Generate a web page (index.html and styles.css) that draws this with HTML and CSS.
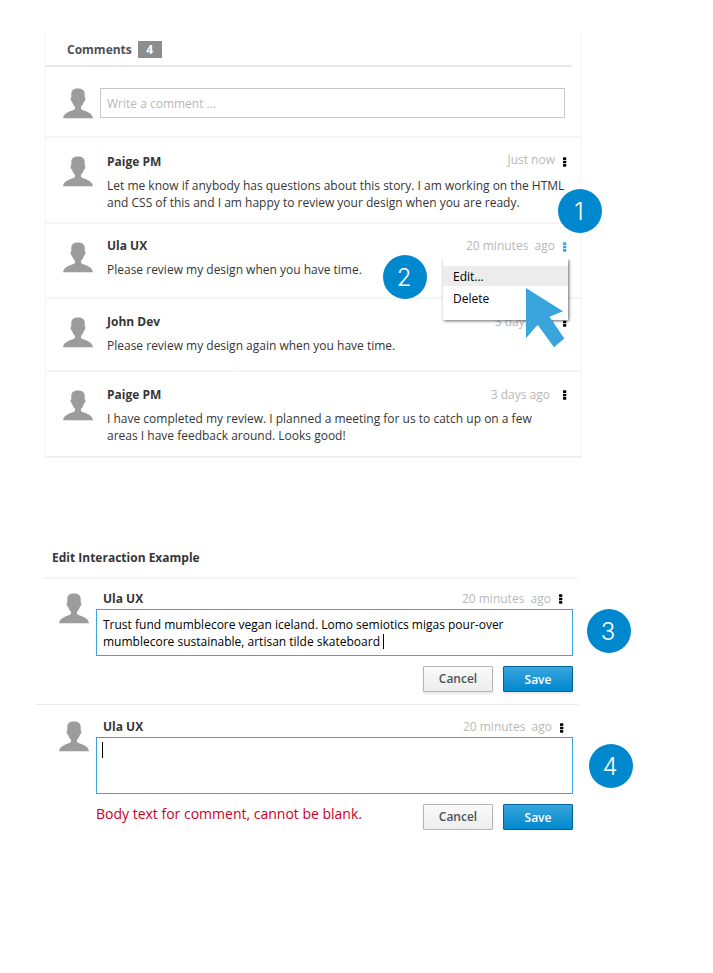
FILE: index.html
```html
<!DOCTYPE html>
<html lang="en">
<head>
<meta charset="utf-8">
<title>Comments</title>
<link rel="stylesheet" href="styles.css">
</head>
<body>
<svg class="defs" aria-hidden="true">
  <symbol id="avatar" viewBox="0 0 30 31">
    <path d="M15 0.5C11 0.5 8.3 2.2 8.3 6v3.4c-.8.1-.9.8-.7 1.6.2 1.2.5 2.4 1.4 2.6.5 2.2 1.6 3.9 3 5.2v2.1C9.500 23 1 23.500 0 30.200h30C29 23.500 20.500 23 18 20.900v-2.100c1.400-1.300 2.500-3 3-5.200.9-.2 1.200-1.400 1.400-2.600.2-.8.1-1.500-.7-1.600V6C21.700 2.200 19 .5 15 .5z"/>
  </symbol>
  <symbol id="dots" viewBox="0 0 5 10">
    <rect x="1" y="0.300" width="3.300" height="2.600" rx=".6"/><rect x="1" y="3.700" width="3.300" height="2.600" rx=".6"/><rect x="1" y="7.100" width="3.300" height="2.600" rx=".6"/>
  </symbol>
</svg>

<section class="panel">
  <header class="panel-head"><h2>Comments</h2><span class="count">4</span></header>
  <div class="compose">
    <svg class="avatar"><use href="#avatar"/></svg>
    <div class="field">Write a comment ...</div>
  </div>
  <article class="comment c1">
    <svg class="avatar"><use href="#avatar"/></svg>
    <div class="content">
      <div class="meta"><b>Paige PM</b><time>Just now</time><svg class="dots"><use href="#dots"/></svg></div>
      <p>Let me know if anybody has questions about this story. I am working on the HTML<br>and CSS of this and I am happy to review your design when you are ready.</p>
    </div>
    <span class="step step1">1</span>
  </article>
  <article class="comment c2">
    <svg class="avatar"><use href="#avatar"/></svg>
    <div class="content">
      <div class="meta"><b>Ula UX</b><time>20 minutes&nbsp; ago</time><svg class="dots active"><use href="#dots"/></svg></div>
      <p>Please review my design when you have time.</p>
    </div>
    <span class="step step2">2</span>
    <div class="menu">
      <div class="item hover">Edit...</div>
      <div class="item">Delete</div>
      <svg class="cursor" viewBox="0 0 39 60"><path d="M0 0L37 23.300 23.500 28.700 38.300 50.500 28 59.200 11.600 36.700 0 50.200z"/></svg>
    </div>
  </article>
  <article class="comment c3">
    <svg class="avatar"><use href="#avatar"/></svg>
    <div class="content">
      <div class="meta"><b>John Dev</b><time>3 days ago</time><svg class="dots"><use href="#dots"/></svg></div>
      <p>Please review my design again when you have time.</p>
    </div>
  </article>
  <article class="comment c4">
    <svg class="avatar"><use href="#avatar"/></svg>
    <div class="content">
      <div class="meta"><b>Paige PM</b><time>3 days ago</time><svg class="dots"><use href="#dots"/></svg></div>
      <p>I have completed my review. I planned a meeting for us to catch up on a few<br>areas I have feedback around. Looks good!</p>
    </div>
  </article>
</section>

<section class="example">
  <h2>Edit Interaction Example</h2>
  <article class="edit e1">
    <svg class="avatar"><use href="#avatar"/></svg>
    <div class="form">
      <div class="meta"><b>Ula UX</b><time>20 minutes&nbsp; ago</time><svg class="dots"><use href="#dots"/></svg></div>
      <div class="box">Trust fund mumblecore vegan iceland. Lomo semiotics migas pour-over<br>mumblecore sustainable, artisan tilde skateboard <i class="caret"></i></div>
      <div class="actions"><button class="btn">Cancel</button><button class="btn primary">Save</button></div>
      <span class="step step3">3</span>
    </div>
  </article>
  <article class="edit e2">
    <svg class="avatar"><use href="#avatar"/></svg>
    <div class="form">
      <div class="meta"><b>Ula UX</b><time>20 minutes&nbsp; ago</time><svg class="dots"><use href="#dots"/></svg></div>
      <div class="box"><i class="caret"></i></div>
      <div class="actions"><p class="error">Body text for comment, cannot be blank.</p><button class="btn">Cancel</button><button class="btn primary">Save</button></div>
      <span class="step step4">4</span>
    </div>
  </article>
</section>
</body>
</html>
```
FILE: styles.css
```css
* { box-sizing: border-box; }
body { margin: 0; padding: 32px 0 0; background: #fff; color: #363636; font: 12px/17px "Open Sans", sans-serif; }
h2, p { margin: 0; }
h2 { font-size: 12px; line-height: 17px; font-weight: 700; }
.defs { position: absolute; width: 0; height: 0; }
.avatar { flex: none; width: 30px; height: 31px; fill: #9c9c9c; }
.dots { flex: none; width: 5px; height: 10px; fill: #000; }
.dots.active { fill: #39a5dc; }

.panel { width: 537px; height: 425px; margin-left: 45px; border: 1px solid #f5f5f5; border-top: 0; border-bottom-color: #ececec; box-shadow: 0 1px 1px #f5f5f5; }
.panel-head { display: flex; align-items: center; gap: 6px; width: 527px; height: 35px; margin-left: -1px; padding: 2px 0 0 22px; border-bottom: 2px solid #e8e8e8; color: #4d5258; }
.count { width: 24px; height: 17px; background: #8b8d8f; color: #fff; font-weight: 700; text-align: center; }
.compose { display: flex; height: 69px; padding: 21px 0 0 17px; }
.field { width: 465px; height: 30px; margin-left: 7px; padding: 6px; border: 1px solid #c7c7c7; color: #b8b8b8; }

.comment { position: relative; display: flex; padding: 18px 0 0 17px; border-top: 2px solid #f5f5f5; }
.c1 { height: 86px; }
.c2 { height: 75px; }
.c3, .c4 { height: 73px; }
.content { width: 460px; margin-left: 14px; }
.meta { display: flex; height: 17px; margin-bottom: 7px; }
.meta b { flex: 1; }
.meta time { color: #b8b8b8; }
.meta .dots { margin: 4px 0 0 7px; }
.c1 .content { margin-top: -3px; }
.c2 .content { margin-top: -5px; }
.c3 .content, .c4 .content { margin-top: -4px; }
.c1 time { margin-top: -2px; }
.c2 .meta .dots { margin-top: 5px; }
.c3 .meta .dots { margin-left: 8px; }
.c4 .meta .dots { margin-left: 12px; }
.content p { white-space: nowrap; }

.step { position: absolute; width: 44px; height: 44px; border-radius: 50%; padding-right: 2px; background: #0088ce; color: #fff; font: 300 24px/46px Inter, sans-serif; text-align: center; z-index: 3; }
.step1 { left: 512px; top: 51px; }
.step2 { left: 337px; top: 31px; }

.menu { position: absolute; left: 397px; top: 35px; width: 125px; height: 61px; padding-top: 7px; background: #fff; box-shadow: 1px 1px 3px rgba(0,0,0,.6); color: #000; z-index: 2; clip-path: inset(0 -6px -30px -6px); }
.item { height: 20px; margin-bottom: 2px; padding: 2px 10px; }
.hover { background: #ececec; }
.cursor { position: absolute; left: 83px; top: 29px; width: 39px; height: 60px; fill: #39a5dc; }

.example { width: 542px; margin: 92px 0 0 36px; }
.example h2 { margin-left: 6px; padding: 0 0 11px 10px; border-bottom: 2px solid #f5f5f5; }
.edit { display: flex; padding-left: 23px; }
.e1 { height: 125px; padding-top: 14px; }
.e2 { padding-top: 16px; border-top: 1px solid #e8e8e8; }
.form { position: relative; width: 477px; margin: -3px 0 0 7px; }
.edit .meta { margin: 0 10px 2px 7px; }
.edit .meta .dots { margin: 5px 0 0 7px; }
.e1 .meta .dots { margin-top: 4px; }
.e2 .meta { margin-right: 9px; }
.box { height: 47px; padding: 6px; border: 1px solid #39a5dc; color: #000; white-space: pre-wrap; }
.e2 .box { height: 57px; padding: 4px 5px; }
.caret { display: inline-block; width: 1px; height: 16px; background: #000; vertical-align: -3px; }
.e1 .caret { vertical-align: -1px; height: 15px; margin-bottom: -2px; }
.actions { display: flex; justify-content: flex-end; gap: 10px; margin-top: 10px; }
.btn { width: 70px; height: 26px; padding: 0 0 1px; border: 1px solid #b7b7b7; border-radius: 1px; background: linear-gradient(#fafafa, #ededed); box-shadow: 0 2px 3px rgba(3,3,3,.1); color: #4d5258; font: 600 12px/22px "Open Sans", sans-serif; }
.primary { padding: 1px 0 0; border-color: #00659c; background: linear-gradient(#39a5dc, #0088ce); color: #fff; }
.error { flex: 1; color: #cc0027; font-size: 14px; line-height: 19px; white-space: nowrap; }
.step3 { left: 491px; top: 19px; }
.step4 { left: 493px; top: 26px; }
```
